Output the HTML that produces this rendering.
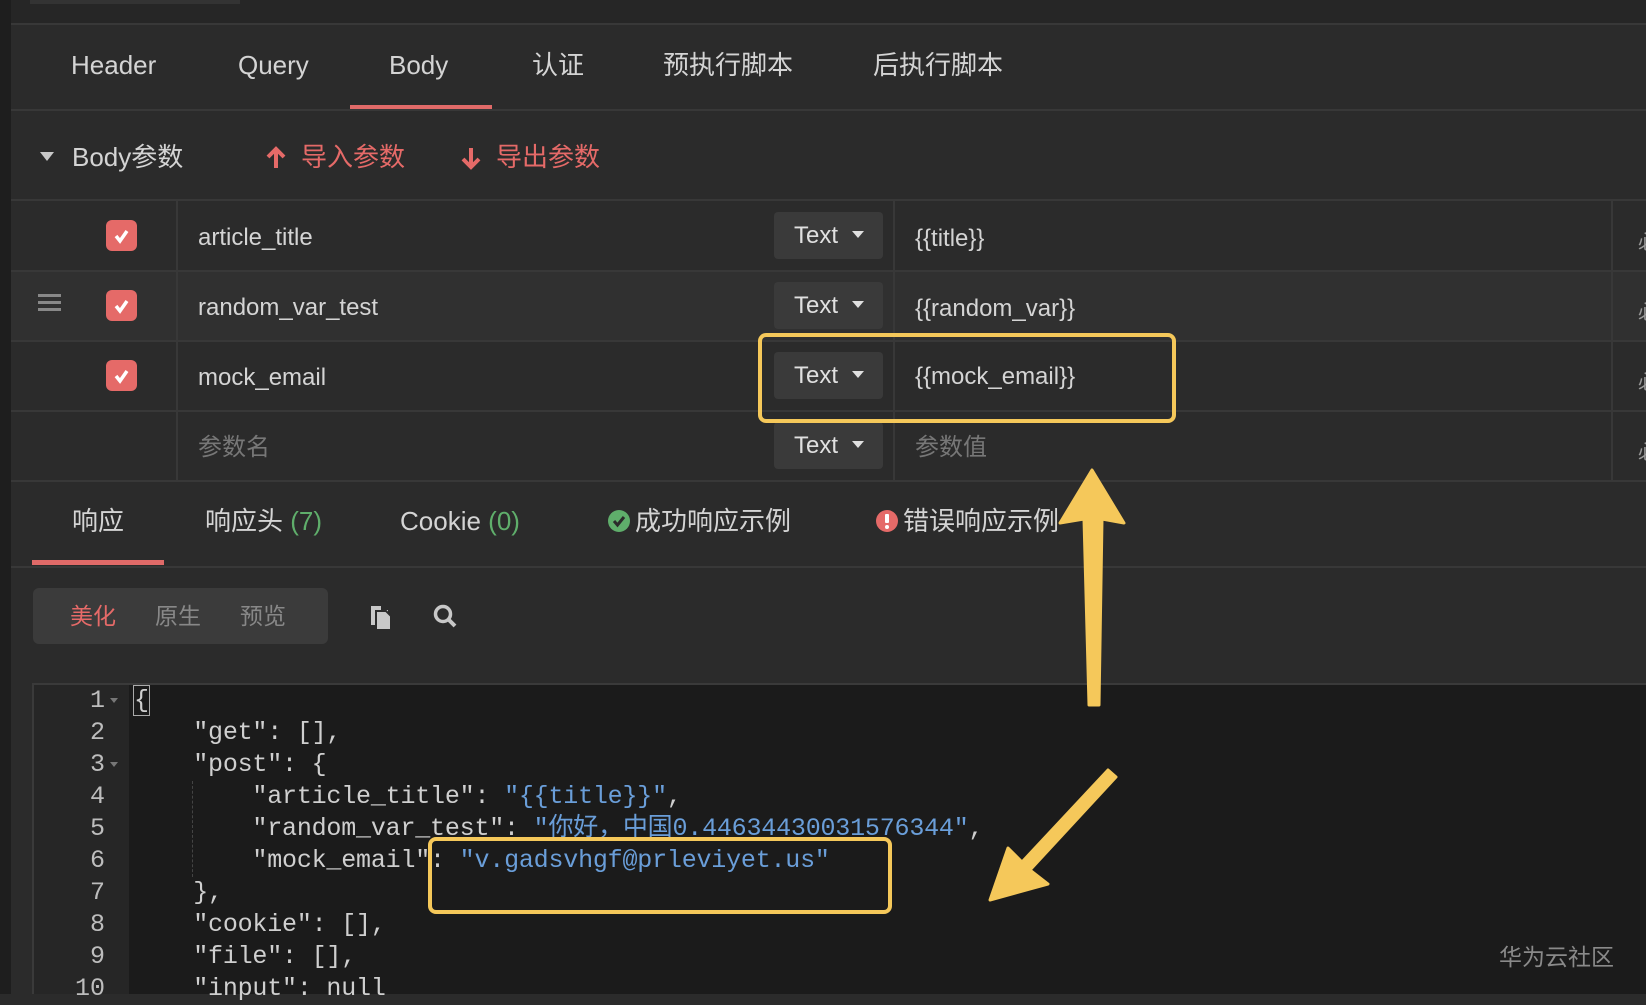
<!DOCTYPE html>
<html><head><meta charset="utf-8"><style>
*{margin:0;padding:0;box-sizing:border-box}
body{width:1646px;height:994px;overflow:hidden;background:#2b2b2b;font-family:"Liberation Sans","Noto Sans CJK SC",sans-serif;color:#d4d4d4;position:relative}
.a{position:absolute;white-space:nowrap}
.t{font-size:26px;line-height:30px}
.hl{position:absolute;height:2px;background:#383838}
.vl{position:absolute;width:2px;background:#383838}
.cb{position:absolute;width:31px;height:31px;border-radius:6px;background:#e56a68}
.btn{position:absolute;left:774px;width:109px;height:47px;background:#3a3a3a;border-radius:4px;font-size:24px;line-height:47px;padding-left:20px;color:#e0e0e0}
.btn:after{content:"";position:absolute;left:78px;top:19px;border:6px solid transparent;border-top:7px solid #e0e0e0}
.code{font-family:"Liberation Mono","Noto Sans CJK SC",monospace;font-size:25px;line-height:32px;color:#cfcfcf;white-space:pre;letter-spacing:-0.2px}
.s{color:#6a9ed9}
.ln{position:absolute;width:70px;text-align:right;left:35px;font-family:"Liberation Mono",monospace;font-size:25px;color:#bdbdbd}
.r{font-size:24px}
</style></head><body>
<div class="a" style="left:0;top:0;width:11px;height:994px;background:#1e1e1e"></div>
<div class="a" style="left:11px;top:0;width:1635px;height:24px;background:#262626"></div>
<div class="hl" style="left:11px;top:23px;width:1635px"></div>
<div class="a" style="left:30px;top:0;width:210px;height:4px;background:#333"></div>
<div class="a t" style="left:71px;top:50px">Header</div>
<div class="a t" style="left:238px;top:50px">Query</div>
<div class="a t" style="left:389px;top:50px">Body</div>
<div class="a t" style="left:532px;top:50px">认证</div>
<div class="a t" style="left:663px;top:50px">预执行脚本</div>
<div class="a t" style="left:873px;top:50px">后执行脚本</div>
<div class="a" style="left:350px;top:105px;width:142px;height:5px;background:#e06a68"></div>
<div class="hl" style="left:11px;top:109px;width:1635px"></div>
<div class="a" style="left:40px;top:152px;border:7px solid transparent;border-top:9px solid #c8c8c8"></div>
<div class="a t" style="left:72px;top:142px">Body参数</div>
<svg class="a" style="left:265px;top:146px" width="22" height="24" viewBox="0 0 22 24"><path d="M11 22V4M3 11l8-8 8 8" stroke="#e56a68" stroke-width="4" fill="none"/></svg>
<div class="a t" style="left:301px;top:142px;color:#e56a68">导入参数</div>
<svg class="a" style="left:460px;top:146px" width="22" height="24" viewBox="0 0 22 24"><path d="M11 2v18M3 13l8 8 8-8" stroke="#e56a68" stroke-width="4" fill="none"/></svg>
<div class="a t" style="left:496px;top:142px;color:#e56a68">导出参数</div>
<div class="a" style="left:11px;top:271px;width:1635px;height:70px;background:#303030"></div>
<div class="hl" style="left:11px;top:199px;width:1635px"></div>
<div class="hl" style="left:11px;top:270px;width:1635px"></div>
<div class="hl" style="left:11px;top:340px;width:1635px"></div>
<div class="hl" style="left:11px;top:410px;width:1635px"></div>
<div class="hl" style="left:11px;top:480px;width:1635px"></div>
<div class="vl" style="left:176px;top:200px;height:281px"></div>
<div class="vl" style="left:893px;top:200px;height:281px"></div>
<div class="vl" style="left:1611px;top:200px;height:281px"></div>
<div class="a" style="left:38px;top:294px;width:23px;height:3px;background:#888;box-shadow:0 7px #888,0 14px #888"></div>
<div class="cb" style="left:106px;top:220px"></div>
<div class="cb" style="left:106px;top:290px"></div>
<div class="cb" style="left:106px;top:360px"></div>
<svg class="a" style="left:106px;top:220px" width="31" height="241"><g stroke="#fff" stroke-width="3.5" fill="none"><path d="M10 16l4 5 7-10"/><path d="M10 86l4 5 7-10"/><path d="M10 156l4 5 7-10"/></g></svg>
<div class="a t r" style="left:198px;top:223px">article_title</div>
<div class="a t r" style="left:198px;top:293px">random_var_test</div>
<div class="a t r" style="left:198px;top:363px">mock_email</div>
<div class="a t r" style="left:198px;top:433px;color:#777">参数名</div>
<div class="btn" style="top:212px">Text</div>
<div class="btn" style="top:282px">Text</div>
<div class="btn" style="top:352px">Text</div>
<div class="btn" style="top:422px">Text</div>
<div class="a t r" style="left:915px;top:224px">{{title}}</div>
<div class="a t r" style="left:915px;top:294px">{{random_var}}</div>
<div class="a t r" style="left:915px;top:362px">{{mock_email}}</div>
<div class="a t r" style="left:915px;top:433px;color:#777">参数值</div>
<div class="a t" style="left:1638px;top:228px;font-size:20px;color:#999">必</div>
<div class="a t" style="left:1638px;top:298px;font-size:20px;color:#999">必</div>
<div class="a t" style="left:1638px;top:368px;font-size:20px;color:#999">必</div>
<div class="a t" style="left:1638px;top:438px;font-size:20px;color:#999">必</div>
<div class="a t" style="left:72px;top:506px">响应</div>
<div class="a t" style="left:205px;top:506px">响应头 <span style="color:#5fae6b">(7)</span></div>
<div class="a t" style="left:400px;top:506px">Cookie <span style="color:#5fae6b">(0)</span></div>
<svg class="a" style="left:607px;top:509px" width="24" height="24"><circle cx="12" cy="12" r="11" fill="#5fae6b"/><path d="M7 12l3.5 4 6.5-8" stroke="#2b2b2b" stroke-width="3" fill="none"/></svg>
<div class="a t" style="left:635px;top:506px">成功响应示例</div>
<svg class="a" style="left:875px;top:509px" width="24" height="24"><circle cx="12" cy="12" r="11" fill="#e56a68"/><rect x="10" y="5" width="4" height="9" rx="1" fill="#fff"/><circle cx="12" cy="18" r="2" fill="#fff"/></svg>
<div class="a t" style="left:903px;top:506px">错误响应示例</div>
<div class="a" style="left:32px;top:560px;width:132px;height:5px;background:#e06a68"></div>
<div class="hl" style="left:11px;top:566px;width:1635px"></div>
<div class="a" style="left:33px;top:588px;width:295px;height:56px;background:#3b3b3b;border-radius:6px"></div>
<div class="a t" style="left:70px;top:601px;font-size:23px;color:#e56a68">美化</div>
<div class="a t" style="left:155px;top:601px;font-size:23px;color:#888">原生</div>
<div class="a t" style="left:240px;top:601px;font-size:23px;color:#888">预览</div>
<svg class="a" style="left:368px;top:603px" width="28" height="28"><path d="M3 3h10v4h3l4 0v20H8V22H3z" fill="#c8c8c8"/><path d="M8 8h10l5 5v14H8z" fill="#c8c8c8" stroke="#2b2b2b" stroke-width="2"/></svg>
<svg class="a" style="left:432px;top:603px" width="28" height="28"><circle cx="11" cy="11" r="7.5" stroke="#c8c8c8" stroke-width="3.5" fill="none"/><path d="M16 16l7 7" stroke="#c8c8c8" stroke-width="4"/></svg>
<div class="a" style="left:32px;top:683px;width:1614px;height:311px;background:#1b1b1b;border-top:2px solid #3a3a3a;border-left:2px solid #3a3a3a"></div>
<div class="a" style="left:34px;top:685px;width:95px;height:309px;background:#262626"></div>
<div class="a" style="left:192px;top:781px;width:1px;height:96px;border-left:1px dashed #444"></div>
<div class="ln" style="top:685px;line-height:32px">1<br>2<br>3<br>4<br>5<br>6<br>7<br>8<br>9<br>10</div>
<div class="a" style="left:110px;top:698px;border:4px solid transparent;border-top:5px solid #777"></div>
<div class="a" style="left:110px;top:762px;border:4px solid transparent;border-top:5px solid #777"></div>
<div class="a code" style="left:134px;top:685px"><span style="outline:1px solid #aaa">{</span>
    "get": [],
    "post": {
        "article_title": <span class="s">"{{title}}"</span>,
        "random_var_test": <span class="s">"你好，中国0.44634430031576344"</span>,
        "mock_email": <span class="s">"v.gadsvhgf@prleviyet.us"</span>
    },
    "cookie": [],
    "file": [],
    "input": null</div>
<div class="a" style="left:1499px;top:938px;font-size:23px;color:#8a8a8a">华为云社区</div>
<div class="a" style="left:758px;top:333px;width:418px;height:90px;border:4px solid #f5c85a;border-radius:8px"></div>
<div class="a" style="left:428px;top:837px;width:464px;height:77px;border:4px solid #f5c85a;border-radius:8px"></div>
<svg class="a" style="left:0;top:0" width="1646" height="994"><g fill="#f5c85a" stroke="#f5c85a" stroke-linejoin="round" stroke-linecap="round"><path d="M1092 470L1124 523L1102 519L1099 705L1089 705L1084 519L1060 523Z" stroke-width="3"/><path d="M1116 777L1030 870L1048 884L990 900L1008 848L1022 862L1108 770Z" stroke-width="3"/></g></svg>
</body></html>
